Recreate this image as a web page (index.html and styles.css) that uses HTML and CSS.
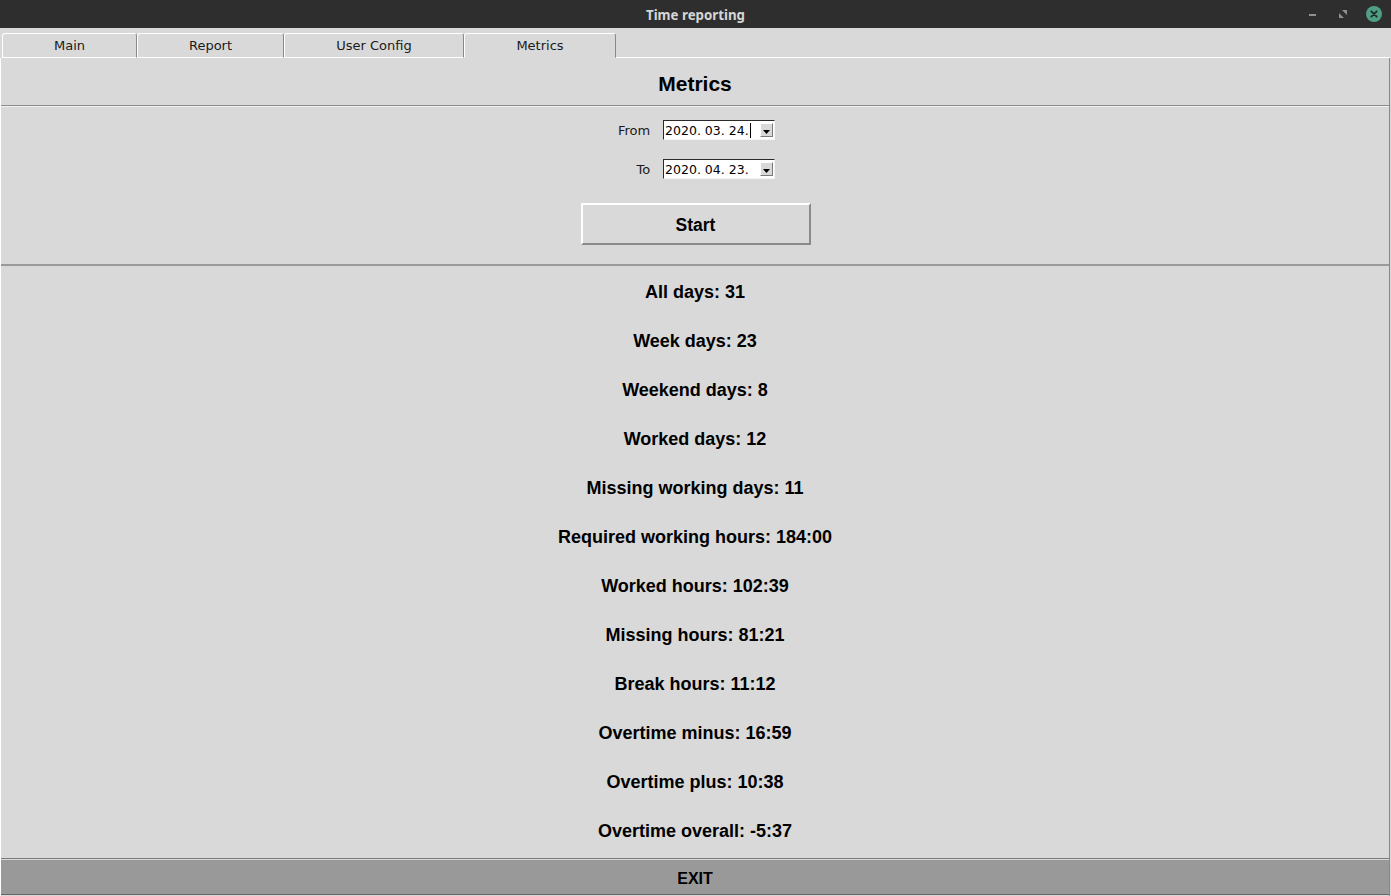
FILE: index.html
```html
<!DOCTYPE html>
<html>
<head>
<meta charset="utf-8">
<title>Time reporting</title>
<link rel="stylesheet" href="styles.css">
</head>
<body>
<div class="window">
  <div class="titlebar">
    <div></div>
    <div class="title">Time reporting</div>
    <div class="controls">
      <span class="ctl-min"></span>
      <svg class="ctl-max" width="8" height="8" viewBox="0 0 8 8"><path d="M3 0H8V5Z M0 3V8H5Z" fill="#8f8f8f"/></svg>
      <svg class="ctl-close" width="16" height="16" viewBox="0 0 16 16"><circle cx="8" cy="8" r="8" fill="#4f9e86"/><path d="M5.3 5.3L10.7 10.7M10.7 5.3L5.3 10.7" stroke="#1f2a27" stroke-width="1.8" stroke-linecap="round"/></svg>
    </div>
  </div>
  <div class="tabs">
    <div class="tab tab-main">Main</div>
    <div class="tab tab-report">Report</div>
    <div class="tab tab-user">User Config</div>
    <div class="tab tab-metrics active">Metrics</div>
    <div class="tab-rest"></div>
  </div>
  <div class="panel">
    <div class="header">Metrics</div>
    <div class="form">
      <div class="fields">
        <label class="lbl">From</label>
        <div class="entry"><span class="val">2020. 03. 24.</span><span class="caret"></span><span class="drop"><svg width="7" height="4" viewBox="0 0 7 4"><path d="M0 0H7L3.5 4Z" fill="#000"/></svg></span></div>
        <label class="lbl">To</label>
        <div class="entry"><span class="val">2020. 04. 23.</span><span class="drop"><svg width="7" height="4" viewBox="0 0 7 4"><path d="M0 0H7L3.5 4Z" fill="#000"/></svg></span></div>
      </div>
      <button class="start">Start</button>
    </div>
    <div class="stats">
      <p>All days: 31</p>
      <p>Week days: 23</p>
      <p>Weekend days: 8</p>
      <p>Worked days: 12</p>
      <p>Missing working days: 11</p>
      <p>Required working hours: 184:00</p>
      <p>Worked hours: 102:39</p>
      <p>Missing hours: 81:21</p>
      <p>Break hours: 11:12</p>
      <p>Overtime minus: 16:59</p>
      <p>Overtime plus: 10:38</p>
      <p>Overtime overall: -5:37</p>
    </div>
    <div class="exit-wrap">
      <div class="exit">EXIT</div>
    </div>
  </div>
</div>
</body>
</html>
```

FILE: styles.css
```css
* { box-sizing: border-box; }
html, body { margin: 0; padding: 0; }
body {
  width: 1391px;
  height: 896px;
  overflow: hidden;
  background: #d9d9d9;
  font-family: "DejaVu Sans", sans-serif;
}
.window {
  display: flex;
  flex-direction: column;
  height: 896px;
}
.titlebar {
  height: 28px;
  background: #2e2e2e;
  display: grid;
  grid-template-columns: 1fr auto 1fr;
  align-items: center;
}
.title {
  font-family: "Noto Sans", sans-serif;
  font-weight: bold;
  font-size: 13.3px;
  color: #d6d6d6;
  padding-top: 1px;
}
.controls {
  display: flex;
  justify-content: flex-end;
  align-items: center;
  padding-right: 9px;
}
.ctl-min {
  display: block;
  width: 7px;
  height: 2px;
  background: #8f8f8f;
  margin-right: 23px;
  margin-top: 1px;
}
.ctl-max { display: block; margin-right: 19px; }
.ctl-close { display: block; }

.tabs {
  height: 30px;
  display: flex;
  align-items: flex-end;
  padding-left: 2px;
}
.tab {
  height: 25px;
  border-top: 1px solid #ffffff;
  border-left: 1px solid #ffffff;
  border-right: 1px solid #888888;
  border-radius: 3px 3px 0 0;
  border-bottom: 1px solid #ffffff;
  font-size: 13px;
  color: #1a1a1a;
  display: flex;
  justify-content: center;
  align-items: center;
  padding-bottom: 1px;
}
.tab.active { border-bottom-color: #d9d9d9; }
.tab-main { width: 135px; }
.tab-report { width: 147px; }
.tab-user { width: 180px; }
.tab-metrics { width: 152px; }
.tab-rest {
  flex: 1;
  height: 1px;
  background: #ffffff;
  margin-right: 1px;
}

.panel {
  flex: 1;
  display: flex;
  flex-direction: column;
  border-left: 1px solid #ffffff;
  border-right: 1px solid #888888;
  margin-right: 1px;
}
.header {
  height: 48px;
  border-bottom: 1px solid #8c8c8c;
  display: flex;
  justify-content: center;
  align-items: center;
  padding-top: 4px;
  font-family: "Liberation Sans", Arial, sans-serif;
  font-weight: bold;
  font-size: 21px;
  color: #000;
}
.form {
  height: 160px;
  border-top: 1px solid #f2f2f2;
  border-bottom: 2px solid #9a9a9a;
  display: flex;
  flex-direction: column;
  align-items: center;
  padding-top: 13px;
}
.fields {
  display: grid;
  grid-template-columns: auto 112px;
  column-gap: 13px;
  row-gap: 19px;
  align-items: center;
  margin-left: 3px;
}
.lbl {
  font-size: 13px;
  color: #1a1a1a;
  text-align: right;
}
.entry {
  height: 20px;
  background: #ffffff;
  border-top: 1px solid #2a2a2a;
  border-left: 1px solid #2a2a2a;
  border-right: 1px solid #f4f4f4;
  border-bottom: 1px solid #f4f4f4;
  display: flex;
  align-items: center;
  position: relative;
  overflow: hidden;
}
.val {
  font-size: 12.5px;
  color: #000;
  padding-left: 1px;
  white-space: nowrap;
}
.caret {
  display: block;
  width: 1px;
  height: 15px;
  background: #000;
  margin-left: 1px;
}
.drop {
  position: absolute;
  right: 1px;
  top: 2px;
  width: 13px;
  height: 14px;
  background: #d9d9d9;
  border-top: 1px solid #ffffff;
  border-left: 1px solid #ffffff;
  border-right: 1px solid #7a7a7a;
  border-bottom: 1px solid #7a7a7a;
  display: flex;
  justify-content: center;
  align-items: flex-end;
  padding-bottom: 2px;
}
.drop svg { display: block; }
.start {
  margin-top: 24px;
  width: 230px;
  height: 42px;
  background: #d9d9d9;
  border-top: 2px solid #ffffff;
  border-left: 2px solid #ffffff;
  border-right: 2px solid #8a8a8a;
  border-bottom: 2px solid #8a8a8a;
  border-radius: 0;
  font-family: "Liberation Sans", Arial, sans-serif;
  font-weight: bold;
  font-size: 17.5px;
  color: #000;
  padding: 3px 0 0 0;
  margin-left: 1px;
}
.stats {
  flex: 1;
  padding-top: 2px;
  display: flex;
  flex-direction: column;
  align-items: center;
}
.stats p {
  margin: 0;
  height: 49px;
  line-height: 49px;
  font-family: "Liberation Sans", Arial, sans-serif;
  font-weight: bold;
  font-size: 18px;
  color: #000;
}
.exit-wrap {
  border-top: 1px solid #7a7a7a;
  padding-top: 1px;
  padding-bottom: 1px;
}
.exit {
  height: 35px;
  background: #999999;
  border-bottom: 1px solid #666666;
  display: flex;
  justify-content: center;
  align-items: center;
  padding-top: 3px;
  font-family: "Liberation Sans", Arial, sans-serif;
  font-weight: bold;
  font-size: 16px;
  color: #000;
}
```
